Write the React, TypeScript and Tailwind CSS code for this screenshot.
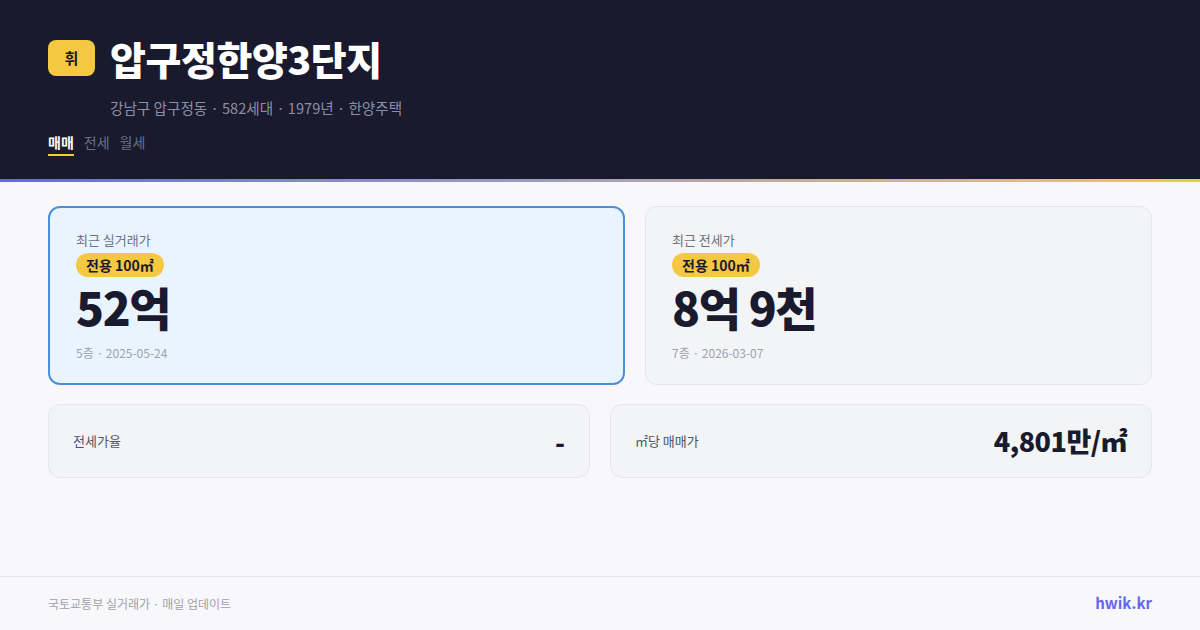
import React from "react";

const font = { fontFamily: '"Noto Sans CJK KR", "Noto Sans", sans-serif' };

export default function App() {
  return (
    <div className="w-[1200px] h-[630px] flex flex-col bg-[#f8f8fa]" style={font}>
      <header className="bg-[#1a1a2e] h-[179px] px-12 pt-[35px] flex flex-col">
        <div className="flex items-center gap-[15px]">
          <div className="w-[47px] h-[36px] rounded-[8px] bg-[#f5c842] flex items-center justify-center text-[15px] font-bold text-[#1a1a2e]">
            휘
          </div>
          <h1 className="text-[39px] leading-[46px] font-black text-white tracking-[-0.01em]">압구정한양3단지</h1>
        </div>
        <div className="pl-[62px] mt-[17px] text-[14.6px] leading-[20px] text-[#8b8fa3]">
          강남구 압구정동 · 582세대 · 1979년 · 한양주택
        </div>
        <nav className="flex gap-[10px] mt-[15px] text-[14px] leading-[19px]">
          <div className="flex flex-col">
            <span className="font-bold text-white">매매</span>
            <span className="mt-[2px] h-[2px] bg-[#f5c842]" />
          </div>
          <span className="text-[#6b6f83]">전세</span>
          <span className="text-[#6b6f83]">월세</span>
        </nav>
      </header>
      <div className="h-[3px] bg-gradient-to-r from-[#6366f1] to-[#f5c842]" />
      <main className="flex-1 px-12 pt-[24px] flex flex-col gap-[19px]">
        <div className="grid grid-cols-[577fr_507fr] gap-5">
          <div className="h-[179px] rounded-[12px] border-2 border-[#4a90d9] bg-[#eaf4fe] px-[26px] pt-[23px]">
            <div className="text-[13px] leading-[18px] text-[#6b7280]">최근 실거래가</div>
            <div className="mt-[4px] inline-flex items-center h-[24px] px-[10px] rounded-full bg-[#f5c842] text-[14px] font-bold text-[#1a1a2e]">
              전용 100㎡
            </div>
            <div className="mt-[1px] text-[46px] leading-[56px] font-black text-[#1a1a2e] tracking-[-0.03em]">52억</div>
            <div className="mt-[11px] text-[12px] leading-[16px] text-[#9ca3af]">5층 · 2025-05-24</div>
          </div>
          <div className="h-[179px] rounded-[12px] border border-[#e5e7eb] bg-[#f3f4f6] px-[26px] pt-[24px]">
            <div className="text-[13px] leading-[18px] text-[#6b7280]">최근 전세가</div>
            <div className="mt-[4px] inline-flex items-center h-[24px] px-[10px] rounded-full bg-[#f5c842] text-[14px] font-bold text-[#1a1a2e]">
              전용 100㎡
            </div>
            <div className="mt-[1px] text-[46px] leading-[56px] font-black text-[#1a1a2e] tracking-[-0.03em]">8억 9천</div>
            <div className="mt-[11px] text-[12px] leading-[16px] text-[#9ca3af]">7층 · 2026-03-07</div>
          </div>
        </div>
        <div className="grid grid-cols-2 gap-5">
          <div className="h-[74px] rounded-[12px] border border-[#e5e7eb] bg-[#f3f4f6] px-6 flex items-center justify-between">
            <span className="text-[13px] text-[#4b5563]">전세가율</span>
            <span className="text-[26px] font-black text-[#1a1a2e]">-</span>
          </div>
          <div className="h-[74px] rounded-[12px] border border-[#e5e7eb] bg-[#f3f4f6] px-6 flex items-center justify-between">
            <span className="text-[13px] text-[#4b5563]">㎡당 매매가</span>
            <span className="text-[27px] font-black text-[#1a1a2e] tracking-[-0.02em]">4,801만/㎡</span>
          </div>
        </div>
      </main>
      <footer className="h-[54px] border-t border-[#e5e7eb] px-12 flex items-center justify-between">
        <span className="text-[12px] text-[#9ca3af]">국토교통부 실거래가 · 매일 업데이트</span>
        <span className="text-[15px] font-bold text-[#6366f1]">hwik.kr</span>
      </footer>
    </div>
  );
}
